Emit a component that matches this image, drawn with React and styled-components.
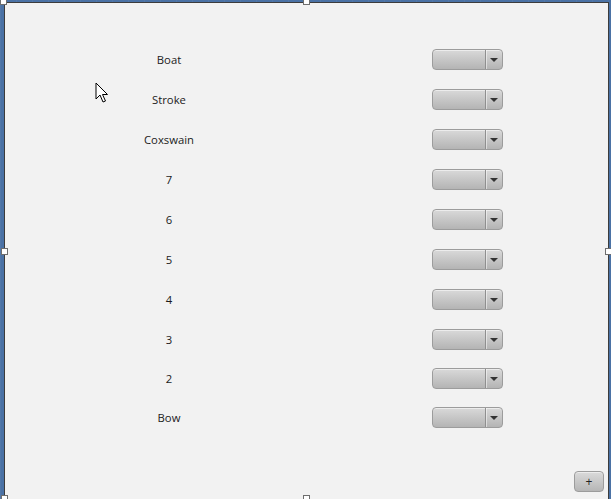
import React from "react";
import styled, { createGlobalStyle } from "styled-components";

const rows = ["Boat", "Stroke", "Coxswain", "7", "6", "5", "4", "3", "2", "Bow"];

const App = () => {
  return (
    <>
      <Global />
      <Desk>
        <Panel>
          <Form>
            {rows.map((r) => (
              <Row key={r}>
                <Label>{r}</Label>
                <Combo>
                  <ComboBody />
                  <ComboArrow>
                    <Triangle />
                  </ComboArrow>
                </Combo>
              </Row>
            ))}
          </Form>
          <Footer>
            <AddButton>+</AddButton>
          </Footer>
        </Panel>
        <Handle style={{ left: 0, top: -2 }} />
        <Handle style={{ left: 303, top: -2 }} />
        <Handle style={{ left: 1, top: 248 }} />
        <Handle style={{ left: 605, top: 248 }} />
        <Handle style={{ left: 1, top: 495 }} />
        <Handle style={{ left: 303, top: 495 }} />
        <Cursor viewBox="0 0 14 22" width="14" height="22">
          <path
            d="M1 1 L1 17 L5 13 L8 20 L10.5 19 L7.5 12.5 L12.5 12.5 Z"
            fill="#fff"
            stroke="#000"
            strokeWidth="1"
            strokeLinejoin="miter"
          />
        </Cursor>
      </Desk>
    </>
  );
};

const Global = createGlobalStyle`
  html, body {
    margin: 0;
    padding: 0;
    width: 611px;
    height: 499px;
    overflow: hidden;
    background: #4b72a5;
  }
  body {
    font-family: "Open Sans", "DejaVu Sans", sans-serif;
  }
`;

const Desk = styled.div`
  position: relative;
  width: 611px;
  height: 499px;
  padding: 2px 2px 0 4px;
  box-sizing: border-box;
  background: repeating-linear-gradient(
      90deg,
      rgba(255, 255, 255, 0.04) 0 1px,
      transparent 1px 16px
    ),
    #4b72a5;
`;

const Panel = styled.div`
  width: 100%;
  height: 520px;
  box-sizing: border-box;
  background: #f2f2f2;
  border-top: 1px solid #3c3c3c;
  border-left: 1px solid #3c3c3c;
  border-right: 1px solid #3c3c3c;
  display: flex;
  flex-direction: column;
`;

const Form = styled.div`
  padding-top: 36px;
  display: flex;
  flex-direction: column;
`;

const Row = styled.div`
  height: 40px;
  display: grid;
  grid-template-columns: 328px 99px 71px;
  align-items: center;
  &:nth-child(n + 9) {
    height: 39px;
  }
`;

const Label = styled.div`
  text-align: center;
  font-size: 11.3px;
  color: #1b1b1b;
  grid-column: 1;
`;

const Combo = styled.div`
  grid-column: 3;
  height: 21px;
  box-sizing: border-box;
  border: 1px solid #9c9c9c;
  border-radius: 4px;
  display: flex;
  overflow: hidden;
  background: linear-gradient(#d9d9d9, #b4b4b4);
  box-shadow: inset 0 1px 0 rgba(255, 255, 255, 0.5);
`;

const ComboBody = styled.div`
  flex: 1;
`;

const ComboArrow = styled.div`
  width: 16px;
  border-left: 1px solid #8f8f8f;
  box-shadow: inset 1px 0 0 rgba(255, 255, 255, 0.5);
  display: flex;
  align-items: center;
  justify-content: center;
`;

const Triangle = styled.div`
  width: 0;
  height: 0;
  border-left: 4px solid transparent;
  border-right: 4px solid transparent;
  border-top: 4px solid #333;
  margin-top: 1px;
`;

const Footer = styled.div`
  display: flex;
  justify-content: flex-end;
  padding: 34px 4px 0 0;
`;

const AddButton = styled.div`
  width: 30px;
  height: 21px;
  box-sizing: border-box;
  border: 1px solid #9c9c9c;
  border-radius: 4px;
  background: linear-gradient(#dadada, #b6b6b6);
  box-shadow: inset 0 1px 0 rgba(255, 255, 255, 0.5);
  display: flex;
  align-items: center;
  justify-content: center;
  font-size: 12px;
  color: #222;
`;

const Handle = styled.div`
  position: absolute;
  width: 7px;
  height: 7px;
  box-sizing: border-box;
  background: #fff;
  border: 1px solid #6e6e6e;
`;

const Cursor = styled.svg`
  position: absolute;
  left: 95px;
  top: 82px;
`;

export default App;
